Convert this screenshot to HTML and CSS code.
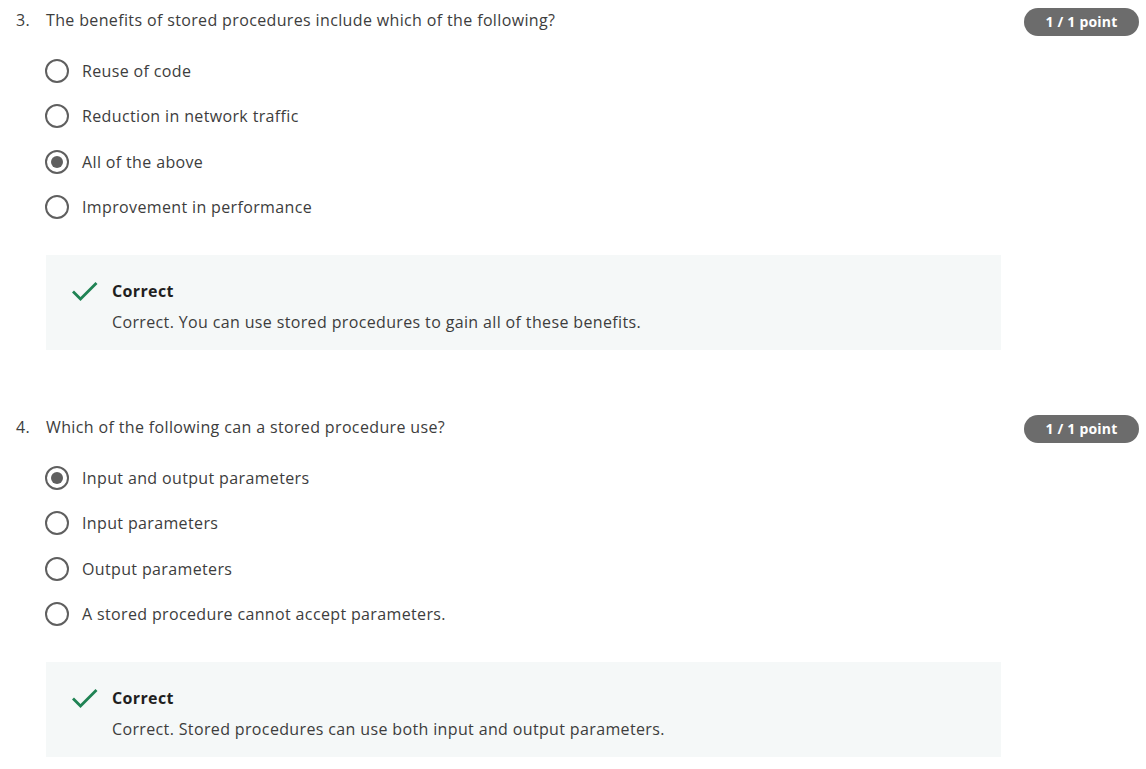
FILE: index.html
```html
<!DOCTYPE html>
<html>
<head>
<meta charset="utf-8">
<link rel="stylesheet" href="styles.css">
</head>
<body>
<div class="quiz">
  <section class="question">
    <div class="q-head">
      <span class="q-num">3.</span>
      <span class="q-text">The benefits of stored procedures include which of the following?</span>
      <span class="badge">1 / 1 point</span>
    </div>
    <ul class="options">
      <li class="option"><span class="radio"></span><span class="opt-text">Reuse of code</span></li>
      <li class="option"><span class="radio"></span><span class="opt-text">Reduction in network traffic</span></li>
      <li class="option"><span class="radio checked"></span><span class="opt-text">All of the above</span></li>
      <li class="option"><span class="radio"></span><span class="opt-text">Improvement in performance</span></li>
    </ul>
    <div class="feedback">
      <svg class="check" width="28" height="22" viewBox="0 0 28 22"><path d="M2 11.5 L9.5 19 L25.5 3" fill="none" stroke="#1f8354" stroke-width="2.8"/></svg>
      <div class="fb-body">
        <div class="fb-title">Correct</div>
        <div class="fb-text">Correct. You can use stored procedures to gain all of these benefits.</div>
      </div>
    </div>
  </section>
  <section class="question">
    <div class="q-head">
      <span class="q-num">4.</span>
      <span class="q-text">Which of the following can a stored procedure use?</span>
      <span class="badge">1 / 1 point</span>
    </div>
    <ul class="options">
      <li class="option"><span class="radio checked"></span><span class="opt-text">Input and output parameters</span></li>
      <li class="option"><span class="radio"></span><span class="opt-text">Input parameters</span></li>
      <li class="option"><span class="radio"></span><span class="opt-text">Output parameters</span></li>
      <li class="option"><span class="radio"></span><span class="opt-text">A stored procedure cannot accept parameters.</span></li>
    </ul>
    <div class="feedback">
      <svg class="check" width="28" height="22" viewBox="0 0 28 22"><path d="M2 11.5 L9.5 19 L25.5 3" fill="none" stroke="#1f8354" stroke-width="2.8"/></svg>
      <div class="fb-body">
        <div class="fb-title">Correct</div>
        <div class="fb-text">Correct. Stored procedures can use both input and output parameters.</div>
      </div>
    </div>
  </section>
</div>
</body>
</html>
```

FILE: styles.css
```css
html, body {
  margin: 0;
  padding: 0;
  background: #ffffff;
}
body {
  font-family: "Open Sans", "Noto Sans", sans-serif;
  font-size: 16px;
  letter-spacing: 0.36px;
  color: #3d3d3d;
}
.quiz {
  display: flex;
  flex-direction: column;
  gap: 57px;
}
.question {
  display: flex;
  flex-direction: column;
}
.q-head {
  display: flex;
  align-items: flex-start;
  padding: 8px 7px 0 16px;
  line-height: 24px;
}
.q-num {
  width: 30px;
  flex: none;
}
.q-text {
  flex: 1;
}
.badge {
  flex: none;
  width: 115px;
  height: 28px;
  border-radius: 14px;
  background: #6c6c6c;
  color: #ffffff;
  font-weight: 700;
  font-size: 14px;
  letter-spacing: 0.2px;
  line-height: 28px;
  text-align: center;
}
.options {
  list-style: none;
  margin: 23px 0 0 0;
  padding: 0 0 0 45px;
  display: flex;
  flex-direction: column;
  gap: 21.33px;
}
.option {
  display: flex;
  align-items: center;
  height: 24px;
  gap: 13px;
}
.radio {
  box-sizing: border-box;
  width: 24px;
  height: 24px;
  border: 2px solid #5f5f5f;
  border-radius: 50%;
  flex: none;
  position: relative;
}
.radio.checked::after {
  content: "";
  position: absolute;
  left: 4px;
  top: 4px;
  width: 12px;
  height: 12px;
  border-radius: 50%;
  background: #5f5f5f;
}
.opt-text {
  line-height: 24px;
}
.feedback {
  margin: 36px 0 0 46px;
  width: 955px;
  box-sizing: border-box;
  background: #f5f8f8;
  padding: 24px 0 16px 25px;
  display: flex;
  gap: 13px;
}
.check {
  flex: none;
  margin-top: 1px;
}
.fb-body {
  display: flex;
  flex-direction: column;
  gap: 7px;
  line-height: 24px;
}
.fb-title {
  font-weight: 700;
  color: #1f1f1f;
}
.fb-text {
  color: #3d3d3d;
}
```
